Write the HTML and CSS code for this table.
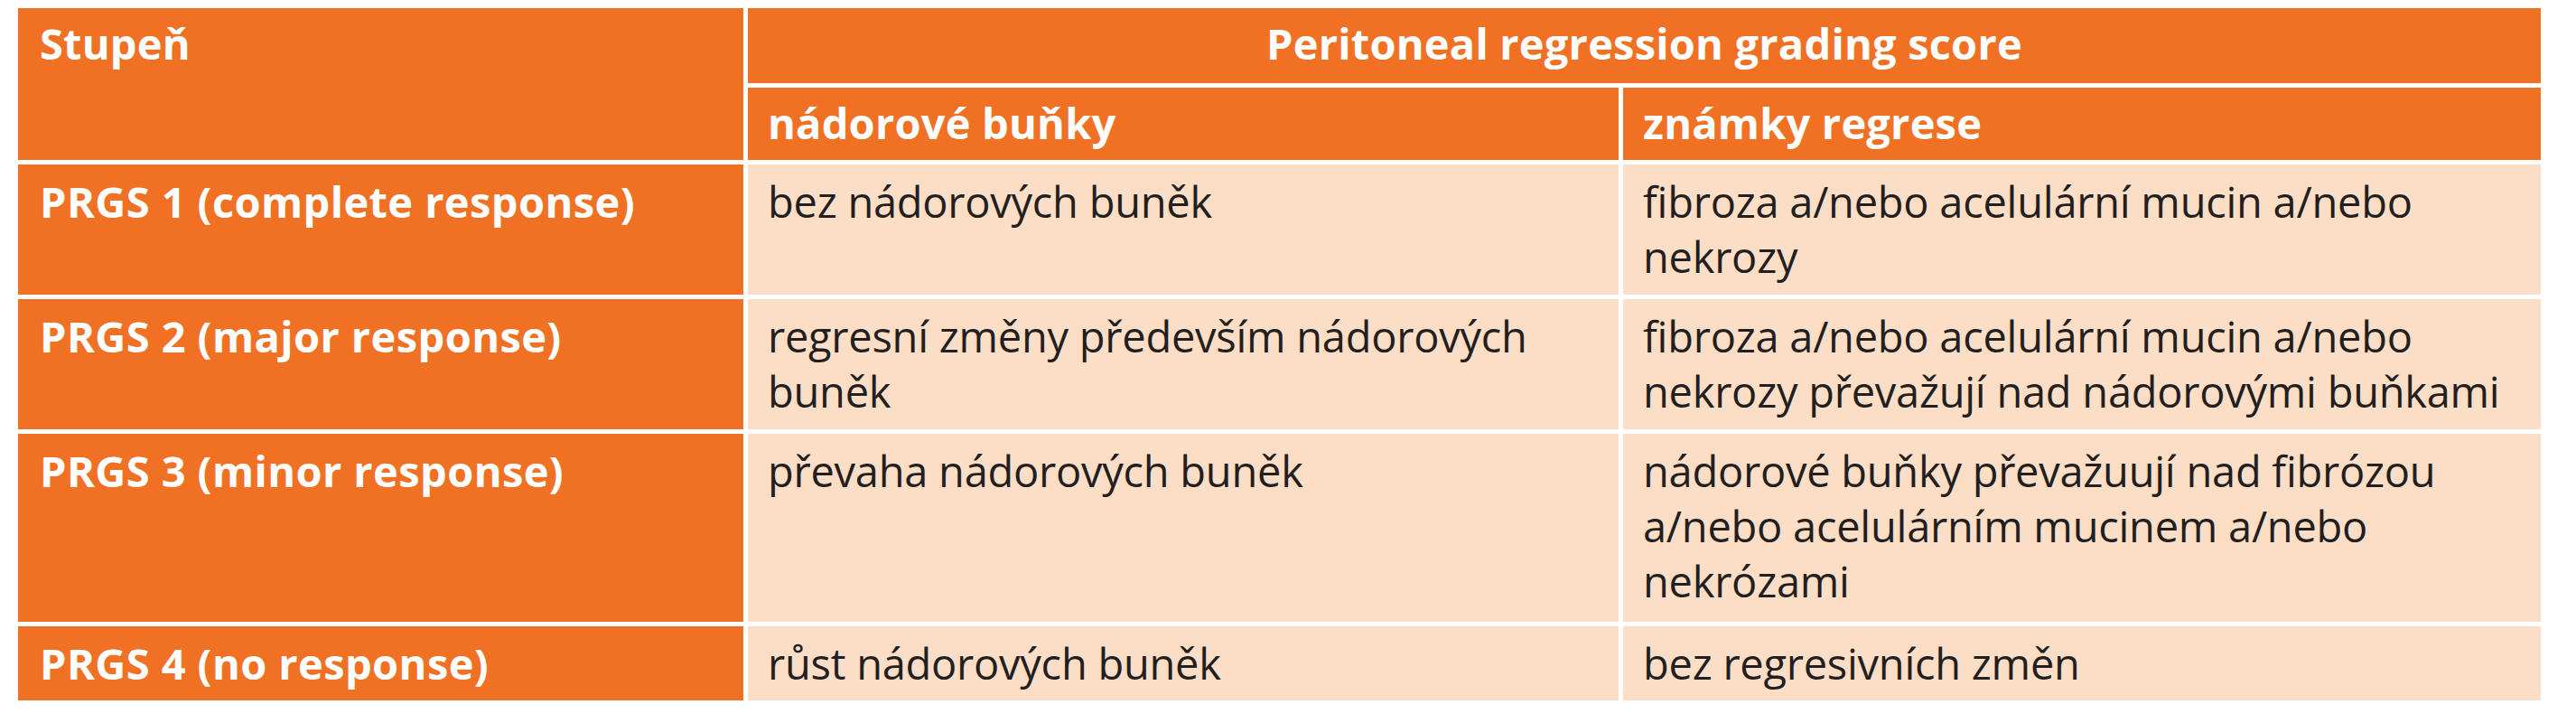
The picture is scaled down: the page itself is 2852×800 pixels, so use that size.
FILE: index.html
```html
<!DOCTYPE html>
<html lang="cs">
<head>
<meta charset="utf-8">
<title>PRGS</title>
<link rel="stylesheet" href="styles.css">
</head>
<body>
<div class="grid">
  <div class="cell head stage">Stupeň</div>
  <div class="cell head span2 center">Peritoneal regression grading score</div>
  <div class="cell head">nádorové buňky</div>
  <div class="cell head">známky regrese</div>

  <div class="cell side">PRGS 1 (complete response)</div>
  <div class="cell body">bez nádorových buněk</div>
  <div class="cell body">fibroza a/nebo acelulární mucin a/nebo<br>nekrozy</div>

  <div class="cell side">PRGS 2 (major response)</div>
  <div class="cell body">regresní změny především nádorových<br>buněk</div>
  <div class="cell body">fibroza a/nebo acelulární mucin a/nebo<br>nekrozy převažují nad nádorovými buňkami</div>

  <div class="cell side">PRGS 3 (minor response)</div>
  <div class="cell body">převaha nádorových buněk</div>
  <div class="cell body">nádorové buňky převažuují nad fibrózou<br>a/nebo acelulárním mucinem a/nebo<br>nekrózami</div>

  <div class="cell side">PRGS 4 (no response)</div>
  <div class="cell body">růst nádorových buněk</div>
  <div class="cell body">bez regresivních změn</div>
</div>
</body>
</html>
```

FILE: styles.css
```css
html, body {
  margin: 0;
  padding: 0;
  background: #ffffff;
}

.grid {
  display: grid;
  grid-template-columns: 803px 964px 1016px;
  grid-template-rows: 83px 80px 144px 144px 208px 82px;
  gap: 5px;
  margin: 9px 0 0 20px;
  font-family: "Open Sans", "Liberation Sans", sans-serif;
  font-size: 47px;
  line-height: 61px;
  letter-spacing: -0.25px;
}

.cell {
  padding: 11px 16px 0 22px;
  white-space: nowrap;
  overflow: hidden;
}

.head {
  background: #f07024;
  color: #ffffff;
  font-weight: 700;
  letter-spacing: 0.2px;
  padding-top: 9px;
}

.stage {
  grid-row: span 2;
  padding-left: 24px;
}

.span2 {
  grid-column: span 2;
}

.center {
  text-align: center;
  padding-left: 0;
  padding-right: 0;
}

.side {
  background: #f07024;
  color: #ffffff;
  font-weight: 700;
  letter-spacing: 0.4px;
  padding-left: 24px;
}

.body {
  background: #fcdec7;
  color: #231f20;
}
```
